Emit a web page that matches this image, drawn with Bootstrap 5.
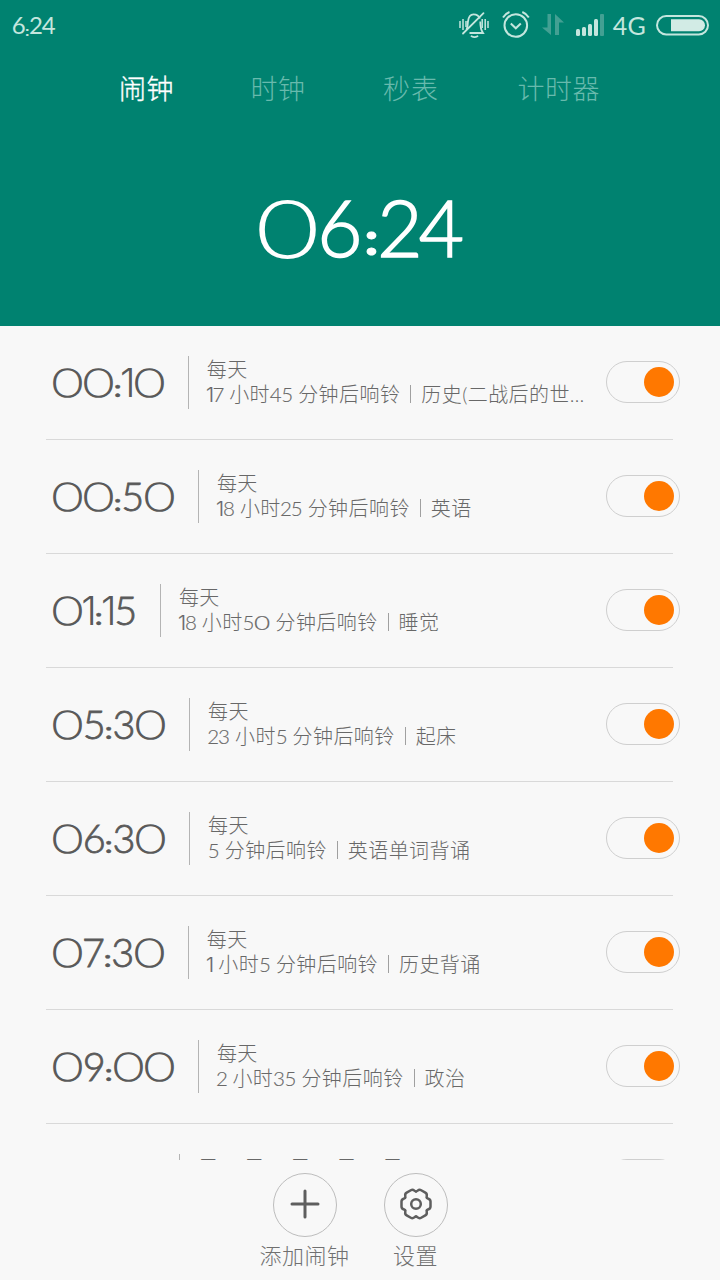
<!DOCTYPE html>
<html lang="zh-CN">
<head>
<meta charset="utf-8">
<meta name="viewport" content="width=device-width, initial-scale=1">
<title>闹钟</title>
<link href="https://cdn.jsdelivr.net/npm/bootstrap@5.3.0/dist/css/bootstrap.min.css" rel="stylesheet">
<style>
  body { background: #f8f8f8; font-family: Lato, "Noto Sans CJK SC", sans-serif; font-weight: 300; color: #686868; }
  .screen { height: 1280px; }
  .top-panel { height: 326px; background: #008270; }
  .status { height: 50px; padding: 0 11px 0 12px; color: #c4e6de; }
  .status svg { display: block; }
  .status-text { font-size: 24px; line-height: 50px; font-weight: 400; }
  .net { font-size: 25px; margin-left: 9px; letter-spacing: .3px; }
  .tabs { padding-left: 119px; height: 76px; font-size: 27px; letter-spacing: .5px; }
  .tabs a { color: #68baad; text-decoration: none; line-height: 78px; width: 131.5px; white-space: nowrap; }
  .tabs a:nth-child(2) { width: 132.5px; }
  .tabs a:nth-child(3) { width: 134.5px; letter-spacing: 1px; }
  .tabs a.active { color: #fff; -webkit-text-stroke: .35px #fff; }
  .clock { font-size: 78px; line-height: 96px; margin-top: 53px; color: #fff; }
  .clock .gc { width: .24em; }
  .alarms { height: 834px; }
  .alarm { height: 114px; margin-left: 46px; margin-right: 47px; border-bottom: 1px solid #d9d9d9; padding: 30px 0 0 6px; }
  .alarm:last-child .info { padding-top: 1.5px; }
  .time { font-size: 39.6px; line-height: 52px; color: #5a5a5a; }
  .rule { width: 1px; height: 53px; margin: 0 18px 0 23px; background: #b4b4b4; }
  .info { font-size: 20px; line-height: 24.5px; letter-spacing: .42px; word-spacing: -.6px; padding-top: 1px; }
  .sep { display: inline-block; width: 1px; height: 18px; background: #a0a0a0; margin: 0 10px 0 10px; vertical-align: -1px; }
  .num { font-size: 20.5px; letter-spacing: 0; -webkit-text-stroke: .15px currentColor; }
  .toggle { width: 74px; height: 42px; border: 1px solid #cfcfcf; border-radius: 21px; padding: 0 5px; margin: 5px -7px 0 auto; }
  .knob { width: 30px; height: 30px; background: #ff7800; }
  .actions { padding: 13px 0 0 259px; }
  .action { width: 91px; margin-right: 20px; font-size: 22px; letter-spacing: .5px; white-space: nowrap; color: #707070; }
  .ring { width: 64px; height: 64px; border: 1.5px solid #bdbdbd; }
  .ring svg { margin-top: -2px; }
  .action span { line-height: 26px; margin-top: 6px; }
  /* digits: proportional widths with a fully round zero */
  .g { display: inline-flex; justify-content: center; width: .56em; line-height: inherit; letter-spacing: 0; }
  .clock .g, .time .g { -webkit-text-stroke: .021em currentColor; }
  .clock .g0, .time .g0 { font-weight: 100; -webkit-text-stroke-width: .04em; transform: scaleX(1.35); }
  .clock .g1, .time .g1 { -webkit-text-stroke-width: 0; }
  .g0 { width: .785em; transform: scaleX(1.36); }
  .g1 { width: .305em; font-family: Inter, sans-serif; }
  .g2 { width: .5em; }
  .g7 { width: .53em; }
  .gc { width: .19em; font-weight: 700; transform: scale(.72, .58); transform-origin: 50% 77%; }
</style>
</head>
<body>
<div class="screen d-flex flex-column overflow-hidden">
  <header class="top-panel flex-shrink-0">
    <div class="status d-flex align-items-center">
      <span class="status-text" data-digits>6:24</span>
      <div class="d-flex align-items-center ms-auto">
        <svg width="30" height="28" viewBox="0 0 30 28" fill="none" stroke="currentColor" stroke-width="1.8">
          <path d="M7.500 18.500C9 16 8.500 13 9 10.500C9.500 6 11.500 3.300 14.500 3.300C17.500 3.300 20 5 20.800 7.500M21.300 10.500C21.300 16 21.500 18.500 24 22H10.500"/>
          <path d="M12.500 25.300q3 1.500 6 0M4 22.500 24.500 2.200" stroke-linecap="round"/>
          <path d="M1 10v7M4 8v11M7 10v6M23.200 8v9M26.200 8v11M29 10v7" stroke-width="1.500"/>
        </svg>
        <svg style="margin-left:13px" width="28" height="28" viewBox="0 0 28 28" fill="none" stroke="currentColor" stroke-width="2">
          <circle cx="13.800" cy="14.500" r="11.300"/><path d="m8.800 12.500 5 4.800 5-4.800M1 6.500Q3.500 2.500 7.500 1M26.800 6.500Q24.300 2.500 20.300 1"/>
        </svg>
        <svg style="margin-left:12px" width="24" height="24" viewBox="0 0 24 24" fill="#43a093">
          <path d="M9 1v21L0 14.500h5.500V1zM13 1l9 8.500h-5V22h-4z"/>
        </svg>
        <svg style="margin-left:9px" width="29" height="24" viewBox="0 0 29 24" fill="currentColor">
          <rect x="1" y="16" width="4" height="7" rx="1.500"/><rect x="7" y="14" width="4" height="9" rx="1.500"/><rect x="13" y="11" width="4" height="12" rx="1.500"/><rect x="19" y="6" width="4" height="17" rx="1.500"/><rect x="25" y="1" width="4" height="22" rx="1" fill="#43a093"/>
        </svg>
        <span class="status-text net">4G</span>
        <svg style="margin-left:10px" width="53" height="21" viewBox="0 0 53 21">
          <rect x="1" y="1" width="51" height="18.500" rx="9.200" fill="none" stroke="currentColor" stroke-width="2"/>
          <path d="M15 4.300h28a6 6 0 0 1 0 12H15z" fill="#d2ebe5"/>
        </svg>
      </div>
    </div>
    <nav class="tabs d-flex">
      <a class="active" href="#">闹钟</a><a href="#">时钟</a><a href="#">秒表</a><a href="#">计时器</a>
    </nav>
    <div class="clock text-center" data-digits>06:24</div>
  </header>

  <main class="alarms overflow-hidden flex-shrink-0" id="alarms"></main>

  <footer class="actions d-flex">
    <div class="action d-flex flex-column align-items-center">
      <div class="ring rounded-circle d-flex align-items-center justify-content-center">
        <svg width="32" height="32" viewBox="-16 -16 32 32" stroke="#5e5e5e" stroke-width="3" stroke-linecap="round"><path d="M-13 0H13M0-13V13"/></svg>
      </div>
      <span>添加闹钟</span>
    </div>
    <div class="action d-flex flex-column align-items-center">
      <div class="ring rounded-circle d-flex align-items-center justify-content-center">
        <svg width="34" height="34" viewBox="-17 -17 34 34" fill="none" stroke="#5e5e5e" stroke-width="2.500" stroke-linecap="round">
          <defs><path id="lobe" d="M10.900-6.300C11.700-4.700 14.500-5.800 14.500-2.400V2.400C14.500 5.800 11.700 4.700 10.900 6.300"/></defs>
          <use href="#lobe"/><use href="#lobe" transform="rotate(60)"/><use href="#lobe" transform="rotate(120)"/><use href="#lobe" transform="rotate(180)"/><use href="#lobe" transform="rotate(240)"/><use href="#lobe" transform="rotate(300)"/>
          <circle r="4.800"/>
        </svg>
      </div>
      <span>设置</span>
    </div>
  </footer>
</div>
<script src="https://cdn.jsdelivr.net/npm/bootstrap@5.3.0/dist/js/bootstrap.bundle.min.js"></script>
<script>
  const digits = s => s.replace(/[0-9:]/g, c => `<span class="g g${c === ':' ? 'c' : c}">${c}</span>`);
  const alarms = [
    ['00:10', '每天', '17 小时45 分钟后响铃', '历史(二战后的世…'],
    ['00:50', '每天', '18 小时25 分钟后响铃', '英语'],
    ['01:15', '每天', '18 小时50 分钟后响铃', '睡觉'],
    ['05:30', '每天', '23 小时5 分钟后响铃', '起床'],
    ['06:30', '每天', '5 分钟后响铃', '英语单词背诵'],
    ['07:30', '每天', '1 小时5 分钟后响铃', '历史背诵'],
    ['09:00', '每天', '2 小时35 分钟后响铃', '政治'],
    ['10:30', '周一 周二 周三 周四 周五', '', '']
  ];
  document.getElementById('alarms').innerHTML = alarms.map(([time, days, left, label]) => `
    <div class="alarm d-flex align-items-start">
      <div class="time text-nowrap">${digits(time)}</div><div class="rule"></div>
      <div class="info text-nowrap"><div>${days}</div><div>${left.replace(/\d+/g, n => `<span class="num">${digits(n)}</span>`)}${label ? `<i class="sep"></i>${label}` : ''}</div></div>
      <div class="toggle d-flex align-items-center justify-content-end flex-shrink-0"><div class="knob rounded-circle"></div></div>
    </div>`).join('');
  document.querySelectorAll('[data-digits]').forEach(e => e.innerHTML = digits(e.textContent));
</script>
</body>
</html>
